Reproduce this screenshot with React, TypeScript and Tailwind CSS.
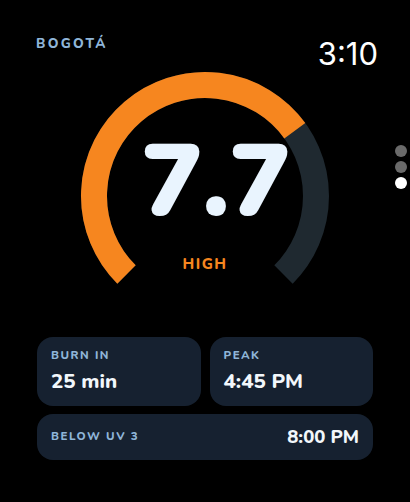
import React from 'react';

const CX = 125;
const R = 111;

function point(deg: number) {
  const a = (deg * Math.PI) / 180;
  return { x: CX + R * Math.sin(a), y: CX - R * Math.cos(a) };
}

function arc(from: number, to: number) {
  const s = point(from);
  const e = point(to);
  const large = to - from > 180 ? 1 : 0;
  return `M ${s.x.toFixed(2)} ${s.y.toFixed(2)} A ${R} ${R} 0 ${large} 1 ${e.x.toFixed(2)} ${e.y.toFixed(2)}`;
}

function Gauge({ value, max }: { value: number; max: number }) {
  const end = -135 + 270 * (value / max);
  return (
    <div className="relative w-[250px] h-[215px]">
      <svg width="250" height="215" viewBox="0 0 250 215">
        <path d={arc(-135, 135)} fill="none" stroke="#1f2930" strokeWidth="26" />
        <path d={arc(-135, end)} fill="none" stroke="#f6861f" strokeWidth="26" />
      </svg>
      <div className="absolute inset-0 flex flex-col items-center">
        <div className="mt-[61px] ml-[22px] text-[101px] leading-none font-black text-[#e9f4fe]">
          {value}
        </div>
        <div className="mt-[24px] text-[15px] leading-none font-extrabold text-[#f6861f] tracking-[1.5px]">
          HIGH
        </div>
      </div>
    </div>
  );
}

function Card({ label, value }: { label: string; value: string }) {
  return (
    <div className="flex-1 h-[69px] rounded-[16px] bg-[#162130] px-[14px] pt-[13px]">
      <div className="text-[11.5px] leading-none font-extrabold tracking-[1.5px] text-[#8fb5d8]">{label}</div>
      <div className="mt-[9px] text-[20.5px] leading-none font-extrabold text-[#f2f7fb]">{value}</div>
    </div>
  );
}

export default function App() {
  return (
    <div
      className="relative w-[410px] h-[502px] bg-black overflow-hidden"
      style={{ fontFamily: '"Nunito", "Lato", "Open Sans", sans-serif' }}
    >
      {/* Header */}
      <div className="h-[70px] flex justify-between pl-[36px] pr-[32px]">
        <div className="pt-[37px] text-[13.5px] leading-none font-extrabold tracking-[2.3px] text-[#8fb5d8]">BOGOTÁ</div>
        <div
          className="pt-[38px] text-[31px] leading-none text-white"
          style={{ fontFamily: 'Inter, "Liberation Sans", sans-serif' }}
        >
          3:10
        </div>
      </div>

      {/* Gauge */}
      <div className="flex justify-center mt-[1px]">
        <Gauge value={7.7} max={11} />
      </div>

      {/* Stats */}
      <div className="mt-[51px] px-[37px] flex flex-col gap-[8px]">
        <div className="flex gap-[9px]">
          <Card label="BURN IN" value="25 min" />
          <Card label="PEAK" value="4:45 PM" />
        </div>
        <div className="h-[46px] rounded-[16px] bg-[#162130] pl-[14px] pr-[14px] flex items-center justify-between">
          <div className="text-[11.5px] leading-none font-extrabold tracking-[1.5px] text-[#8fb5d8]">BELOW UV 3</div>
          <div className="text-[18.5px] leading-none font-extrabold text-[#f2f7fb]">8:00 PM</div>
        </div>
      </div>

      {/* Page dots */}
      <div className="absolute right-[3px] top-[145px] flex flex-col gap-[4px]">
        <div className="w-3 h-3 rounded-full bg-[#6a6a6a]" />
        <div className="w-3 h-3 rounded-full bg-[#6a6a6a]" />
        <div className="w-3 h-3 rounded-full bg-white" />
      </div>
    </div>
  );
}
